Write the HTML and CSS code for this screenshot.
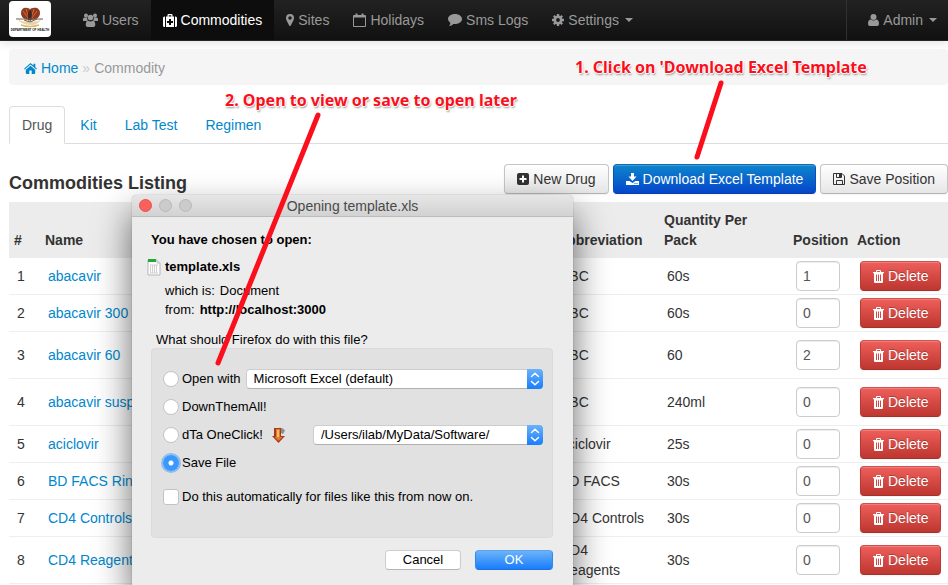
FILE: index.html
```html
<!DOCTYPE html>
<html lang="en">
<head>
<meta charset="utf-8">
<title>Commodities</title>
<link rel="stylesheet" href="styles.css">
</head>
<body>
<svg class="defs" aria-hidden="true">
  <defs>
    <symbol id="trash" viewBox="0 0 11 13"><path fill="currentColor" fill-rule="evenodd" d="M3 2V1q0-1 1-1h3q1 0 1 1v1h3v1.300h-1V12q0 1-1 1H2q-1 0-1-1V3.300H0V2zM4 2h3V1H4zM3 4.500V11h1V4.500zm2 0V11h1V4.500zm2 0V11h1V4.500z"/></symbol>
    <symbol id="steps" viewBox="0 0 16 20"><path d="M4.500 7.500 8 4.200l3.500 3.300M4.500 12.500 8 15.800l3.500-3.300" fill="none" stroke="#fff" stroke-width="1.500" stroke-linecap="round" stroke-linejoin="round"/></symbol>
  </defs>
</svg>

<header class="navbar">
  <a class="brand" href="#" aria-label="Department of Health">
    <svg width="42" height="36" viewBox="0 0 42 36">
      <path d="M21 19c-6 0-9-3-9-7 0-4 3-6 6-5q3 0 3 2 0-2 3-2c4-1 7 1 7 5s-3 7-10 7z" fill="#8f3a20"/>
      <path d="M17 8l3 9M25 8l-3 9M14 10l5 7M28 10l-5 7" stroke="#cf6a30" stroke-width="1"/>
      <path d="M19 11l3-2 1 5-1 6-3 1z" fill="#45261f"/>
      <path d="M8 17q6 6 12 2 8 4 13-2-4 8-12 7-9 0-13-7z" fill="#ead3a6"/>
      <path d="M7 18h27M15 19l6 2 7-3" stroke="#6d6259" stroke-width="1" fill="none"/>
      <path d="M12 24q9 3 18 0" stroke="#deb668" stroke-width="1.500" fill="none"/>
      <text class="brand-text" x="21" y="30" text-anchor="middle">DEPARTMENT OF HEALTH</text>
    </svg>
  </a>
  <nav class="menu">
    <a href="#"><svg width="15" height="14" viewBox="0 0 15 14" fill="currentColor"><circle cx="3" cy="2.500" r="2"/><circle cx="12" cy="2.500" r="2"/><circle cx="7.500" cy="4.500" r="2.800"/><path d="M0 8V6q0-1.500 1.500-1.500H4Q4 6.500 5 7.500L3.500 8zM15 8V6q0-1.500-1.500-1.500H11q0 2-1 3l1.500.5zM2.700 12q0-4.300 2.500-4.300 2.300 1.400 4.600 0 2.500 0 2.500 4.300 0 2-2 2H4.700q-2 0-2-2z"/></svg>Users</a>
    <a href="#" class="active"><svg width="14" height="13" viewBox="0 0 14 13" fill="currentColor"><path fill-rule="evenodd" d="M3 13V2.500h1.500V1q0-1 1-1h3q1 0 1 1v1.500H11V13zM5.700 2.500h2.600V1.200H5.700zM6 5v2H4v2h2v2h2V9h2V7H8V5z"/><path d="M2 2.500V13H1.500Q0 13 0 11.500V4q0-1.500 1.500-1.500zM12 2.500V13h.5q1.500 0 1.500-1.500V4q0-1.500-1.500-1.500z"/></svg>Commodities</a>
    <a href="#"><svg width="8" height="12" viewBox="0 0 8 12" fill="currentColor"><path fill-rule="evenodd" d="M4 0a4 4 0 0 1 4 4c0 2-1 3-3.200 7.500q-.8 1-1.600 0C1 7 0 6 0 4a4 4 0 0 1 4-4zm0 2.200a1.800 1.800 0 1 0 0 3.600 1.800 1.800 0 0 0 0-3.600z"/></svg>Sites</a>
    <a href="#"><svg width="13" height="14" viewBox="0 0 13 14" fill="none" stroke="currentColor"><path d="M.5 2.500h12v11H.5z"/><path d="M1 3.500h11" stroke-width="2"/><path d="M3.500.5v3M9.500.5v3" stroke-width="2"/></svg>Holidays</a>
    <a href="#"><svg width="14" height="12" viewBox="0 0 14 12" fill="currentColor"><path d="M7 0c4 0 7 2.200 7 5s-3 5-7 5l-1.500-.1Q3.500 12 1 12q1.500-1.500 1.300-3.200Q0 7.300 0 5c0-2.800 3-5 7-5z"/></svg>Sms Logs</a>
    <a href="#"><svg width="12" height="12" viewBox="0 0 12 12" fill="none" stroke="currentColor"><circle cx="6" cy="6" r="3.200" stroke-width="2.600"/><path d="M6 0v2.500M6 9.500V12M0 6h2.500M9.500 6H12M1.800 1.800l1.700 1.700M8.500 8.500l1.700 1.700M1.800 10.200l1.700-1.700M8.500 3.500l1.700-1.700" stroke-width="2.300"/></svg>Settings<i class="caret"></i></a>
  </nav>
  <a class="account" href="#"><svg width="11" height="12" viewBox="0 0 11 12" fill="currentColor"><circle cx="5.500" cy="3" r="3"/><path d="M0 10q0-4.500 2.800-4.500 2.700 2 5.400 0Q11 5.500 11 10q0 2-2 2H2q-2 0-2-2z"/></svg>Admin<i class="caret"></i></a>
</header>

<main class="page">
  <nav class="breadcrumb" aria-label="Breadcrumb">
    <a href="#"><svg width="13" height="11" viewBox="0 0 13 11" fill="currentColor"><path d="M6.500 0 9.500 2.600V.8h1.800v3.400L13 5.700l-.7.800-5.800-5-5.800 5-.7-.8z"/><path d="m6.500 2.700 4.700 4V10q0 1-1 1H7.700V7.500H5.300V11H2.800q-1 0-1-1V6.700z"/></svg>Home</a>
    <span class="divider">»</span>
    <span class="current">Commodity</span>
  </nav>

  <nav class="tabs">
    <a href="#" class="selected">Drug</a>
    <a href="#">Kit</a>
    <a href="#">Lab Test</a>
    <a href="#">Regimen</a>
  </nav>

  <div class="toolbar">
    <h1>Commodities Listing</h1>
    <div class="actions">
      <button type="button" class="btn"><svg width="12" height="12" viewBox="0 0 12 12"><rect width="12" height="12" rx="2" fill="currentColor"/><path d="M6 2.500v7M2.500 6h7" stroke="#fff" stroke-width="2"/></svg>New Drug</button>
      <button type="button" class="btn primary"><svg width="13" height="12" viewBox="0 0 13 12" fill="currentColor"><path d="M5 0h3v3.500h2.500L6.500 8l-4-4.500H5z"/><path fill-rule="evenodd" d="M0 8h3.500l3 2 3-2H13v4H0zm8.500 2v1h1v-1zm2 0v1h1v-1z"/></svg>Download Excel Template</button>
      <button type="button" class="btn"><svg width="12" height="12" viewBox="0 0 12 12" fill="none" stroke="currentColor"><path d="M.5.500h8.500l2.500 2.500v8.500H.5zM3.500 11.500v-4h6v4M3.500.500v4h5v-4"/><path d="M6 1v3h2V1z" fill="currentColor" stroke="none"/></svg>Save Position</button>
    </div>
  </div>

  <table class="listing">
    <colgroup><col class="c-num"><col><col class="c-abbr"><col class="c-qty"><col class="c-pos"><col class="c-act"></colgroup>
    <thead>
      <tr><th>#</th><th>Name</th><th>Abbreviation</th><th>Quantity Per Pack</th><th>Position</th><th>Action</th></tr>
    </thead>
    <tbody>
      <tr><td>1</td><td><a href="#">abacavir</a></td><td>ABC</td><td>60s</td><td><input type="text" value="1" aria-label="Position of row 1"></td><td><button type="button" class="btn danger"><svg width="11" height="13"><use href="#trash"/></svg>Delete</button></td></tr>
      <tr><td>2</td><td><a href="#">abacavir 300</a></td><td>ABC</td><td>60s</td><td><input type="text" value="0" aria-label="Position of row 2"></td><td><button type="button" class="btn danger"><svg width="11" height="13"><use href="#trash"/></svg>Delete</button></td></tr>
      <tr class="tall"><td>3</td><td><a href="#">abacavir 60</a></td><td>ABC</td><td>60</td><td><input type="text" value="2" aria-label="Position of row 3"></td><td><button type="button" class="btn danger"><svg width="11" height="13"><use href="#trash"/></svg>Delete</button></td></tr>
      <tr class="tall"><td>4</td><td><a href="#">abacavir susp</a></td><td>ABC</td><td>240ml</td><td><input type="text" value="0" aria-label="Position of row 4"></td><td><button type="button" class="btn danger"><svg width="11" height="13"><use href="#trash"/></svg>Delete</button></td></tr>
      <tr><td>5</td><td><a href="#">aciclovir</a></td><td>aciclovir</td><td>25s</td><td><input type="text" value="0" aria-label="Position of row 5"></td><td><button type="button" class="btn danger"><svg width="11" height="13"><use href="#trash"/></svg>Delete</button></td></tr>
      <tr><td>6</td><td><a href="#">BD FACS Rin</a></td><td>BD FACS</td><td>30s</td><td><input type="text" value="0" aria-label="Position of row 6"></td><td><button type="button" class="btn danger"><svg width="11" height="13"><use href="#trash"/></svg>Delete</button></td></tr>
      <tr><td>7</td><td><a href="#">CD4 Controls</a></td><td>CD4 Controls</td><td>30s</td><td><input type="text" value="0" aria-label="Position of row 7"></td><td><button type="button" class="btn danger"><svg width="11" height="13"><use href="#trash"/></svg>Delete</button></td></tr>
      <tr class="tall"><td>8</td><td><a href="#">CD4 Reagent</a></td><td>CD4 Reagents</td><td>30s</td><td><input type="text" value="0" aria-label="Position of row 8"></td><td><button type="button" class="btn danger"><svg width="11" height="13"><use href="#trash"/></svg>Delete</button></td></tr>
    </tbody>
  </table>
</main>

<section class="dialog" role="dialog" aria-labelledby="dialog-title">
  <div class="titlebar">
    <div class="lights"><i class="close"></i><i></i><i></i></div>
    <h2 id="dialog-title">Opening template.xls</h2>
  </div>
  <div class="dialog-body">
    <p class="lead">You have chosen to open:</p>
    <div class="file">
      <svg width="14" height="17" viewBox="0 0 14 17"><path d="M1 1h9l3 3v12H1z" fill="#fff" stroke="#b5b5b5"/><path d="M1 0h8v3H1z" fill="#24a83a"/><path d="M10 1v3h3" fill="#eee" stroke="#bbb"/><path d="M3 6h8M3.500 6v8M5.500 6v8M7.500 6v8M9.500 6v8M3 14h8" stroke="#d0d0d0"/></svg>
      <strong>template.xls</strong>
    </div>
    <dl class="facts">
      <div><dt>which is:</dt><dd>Document</dd></div>
      <div><dt>from:</dt><dd><strong>http://localhost:3000</strong></dd></div>
    </dl>
    <p class="question">What should Firefox do with this file?</p>
    <form class="panel">
      <div class="option"><input type="radio" name="act" id="open"><label for="open">Open with</label>
        <span class="picker"><select aria-label="Application"><option>Microsoft Excel (default)</option></select><svg class="cap" width="16" height="20"><use href="#steps"/></svg></span></div>
      <div class="option"><input type="radio" name="act" id="dta"><label for="dta">DownThemAll!</label></div>
      <div class="option"><input type="radio" name="act" id="one"><label for="one">dTa OneClick!</label>
        <svg class="arrow" width="15" height="17" viewBox="0 0 15 17"><path d="M7 1q5-1 7 2.500L12 7 7 5z" fill="#8d8d8d"/><path d="M3 1h7v8h4l-6.500 7L1 9h2z" fill="#a8381f"/><path d="M5 2h4v8h2.500l-4 4-4-4H5z" fill="#e07a2e"/><path d="M6 3h2v7H6z" fill="#fbc052"/></svg>
        <span class="picker folder"><select aria-label="Folder"><option>/Users/ilab/MyData/Software/</option></select><svg class="cap" width="16" height="20"><use href="#steps"/></svg></span></div>
      <div class="option"><input type="radio" name="act" id="save" checked><label for="save">Save File</label></div>
      <div class="option auto"><input type="checkbox" id="auto"><label for="auto">Do this automatically for files like this from now on.</label></div>
    </form>
    <div class="buttons"><button type="button">Cancel</button><button type="button" class="ok">OK</button></div>
  </div>
</section>

<svg class="pointers" width="948" height="585" aria-hidden="true">
  <path d="M721 83 697 157" stroke-width="5"/>
  <path d="M318 115 218 363" stroke-width="5"/>
</svg>
<p class="note first">1. Click on 'Download Excel Template</p>
<p class="note second">2. Open to view or save to open later</p>
</body>
</html>
```

FILE: styles.css
```css
* { box-sizing: border-box; }

body {
  position: relative;
  height: 100vh;
  margin: 0;
  overflow: hidden;
  background: #fff;
  color: #333;
  font: 14px/20px "Liberation Sans", Arial, sans-serif;
}

p, h1, h2, dl, dd { margin: 0; }
a { color: #08c; text-decoration: none; }
button, input, select { font: inherit; }
.defs { position: absolute; width: 0; height: 0; }

/* Top bar */
.navbar {
  display: flex;
  height: 41px;
  padding-left: 9px;
  border-bottom: 1px solid #252525;
  background: linear-gradient(#222, #111);
  box-shadow: 0 1px 10px rgba(0, 0, 0, .15);
}
.brand {
  height: 36px;
  margin: 1px 20px 0 0;
  border-radius: 4px;
  background: #fff;
}
.brand svg { display: block; }
.brand-text { font: bold 3px "Liberation Sans", Arial, sans-serif; fill: #111; }
.menu { display: flex; flex: 1; }
.menu a, .account {
  display: flex;
  align-items: center;
  gap: 4px;
  padding: 0 12px;
  color: #999;
}
.menu a.active { background: #0d0d0d; color: #fff; }
.account { padding: 0 11px 0 21px; border-left: 1px solid #303030; }
.caret {
  margin-left: 2px;
  border: 4px solid transparent;
  border-top-color: #999;
  border-bottom: 0;
}

/* Page */
.page { padding: 8px 0 0 9px; }
.breadcrumb {
  display: flex;
  gap: 4px;
  padding: 9px 15px 7px;
  border-radius: 4px;
  background: #f5f5f5;
}
.breadcrumb a { display: flex; align-items: center; gap: 4px; }
.divider { color: #ccc; }
.current { color: #999; }

.tabs {
  display: flex;
  gap: 2px;
  margin-top: 21px;
  border-bottom: 1px solid #ddd;
}
.tabs a {
  margin-bottom: -1px;
  padding: 8px 12px;
  border: 1px solid transparent;
  border-radius: 4px 4px 0 0;
}
.tabs .selected { border-color: #ddd #ddd #fff; background: #fff; color: #555; }

.toolbar {
  display: flex;
  align-items: center;
  justify-content: space-between;
  margin: 20px 0 8px;
}
.toolbar h1 { padding-top: 8px; font-size: 18px; line-height: 22px; }
.actions { display: flex; gap: 4px; }
.btn {
  display: flex;
  align-items: center;
  gap: 4px;
  height: 30px;
  padding: 0 12px;
  border: 1px solid #c5c5c5;
  border-bottom-color: #b3b3b3;
  border-radius: 4px;
  background: linear-gradient(#fff, #e6e6e6);
  box-shadow: inset 0 1px 0 rgba(255, 255, 255, .2), 0 1px 2px rgba(0, 0, 0, .05);
  color: #333;
  white-space: nowrap;
}
.btn.primary {
  border-color: #0a6cb8 #0a4fb8 #0a3fa8;
  background: linear-gradient(#0e85cb, #0546cb);
  color: #fff;
}
.btn.danger {
  border-color: #d0504c #b93a34 #a5302b;
  background: linear-gradient(#ee5f5b, #bd362f);
  color: #fff;
  text-shadow: 0 -1px 0 rgba(0, 0, 0, .25);
}

/* Listing */
.listing { width: 100%; table-layout: fixed; border-collapse: separate; border-spacing: 0; }
.c-num { width: 31px; }
.c-abbr { width: 107px; }
.c-qty { width: 129px; }
.c-pos { width: 64px; }
.c-act { width: 96px; }
.listing th {
  padding: 8px 5px;
  background: #ececec;
  text-align: left;
  vertical-align: bottom;
}
.listing td {
  height: 37px;
  padding: 0 8px;
  border-bottom: 1px solid #eee;
  vertical-align: middle;
}
.listing .tall td { height: 47px; }
.listing input {
  display: block;
  width: 44px;
  height: 30px;
  padding: 0 6px;
  border: 1px solid #ccc;
  border-radius: 4px;
  background: #fff;
  box-shadow: inset 0 1px 1px rgba(0, 0, 0, .075);
  color: #555;
}

/* Download dialog */
.dialog {
  position: absolute;
  top: 195px;
  left: 132px;
  width: 441px;
  bottom: 0;
  border-radius: 5px 5px 0 0;
  background: #ececec;
  box-shadow: 0 0 1px rgba(0, 0, 0, .5), 0 18px 36px rgba(0, 0, 0, .6);
  color: #000;
  font-size: 13px;
}
.titlebar {
  display: grid;
  grid-template-columns: 1fr auto 1fr;
  align-items: center;
  height: 22px;
  padding: 0 7px;
  border-bottom: 1px solid #bcbcbc;
  border-radius: 5px 5px 0 0;
  background: linear-gradient(#e6e6e6, #d2d2d2);
}
.titlebar h2 { color: #4a4a4a; font-size: 14px; font-weight: normal; }
.lights { display: flex; gap: 7px; }
.lights i {
  width: 13px;
  height: 13px;
  border: 1px solid #b9b9b9;
  border-radius: 50%;
  background: #cbcbcb;
}
.lights .close { border-color: #e8504c; background: #fc605c; }
.dialog-body { padding: 13px 20px 0 19px; }
.lead { font-weight: bold; }
.file { display: flex; align-items: center; gap: 4px; margin: 7px 0 4px -4px; }
.facts { padding-left: 14px; }
.facts div { display: flex; gap: 5px; line-height: 19px; }
.question { margin: 11px 0 0 5px; }
.panel {
  height: 190px;
  margin-top: -2px;
  padding: 16px 9px 0 11px;
  border: 1px solid #dbdbdb;
  border-radius: 4px;
  background: #e1e1e1;
}
.option { display: flex; align-items: center; height: 28px; gap: 3px; }
.option.auto { margin-top: 6px; }
.option label { white-space: nowrap; }
.option input {
  flex: none;
  appearance: none;
  width: 16px;
  height: 16px;
  margin: 0;
  border: 1px solid #c3c3c3;
  border-radius: 50%;
  background: #fff;
}
.option input:checked {
  border: 0;
  background: radial-gradient(circle, #fff 0 2px, #3b99fc 3px);
  box-shadow: 0 0 0 2px #8dbcf0;
}
.option input[type="checkbox"] { border-radius: 3px; }
.picker { position: relative; flex: 1; height: 20px; margin-left: 2px; }
.arrow { margin-left: 5px; }
.picker.folder { margin-left: 24px; }
.picker select {
  display: block;
  appearance: none;
  width: 100%;
  height: 20px;
  padding: 0 20px 0 7px;
  border: 1px solid #cdcdcd;
  border-bottom-color: #b0b0b0;
  border-radius: 4px;
  background: #fff;
  color: #000;
  line-height: 18px;
}
.cap {
  position: absolute;
  top: 0;
  right: 0;
  border-radius: 0 4px 4px 0;
  background: linear-gradient(#6bb3fa, #1a7dfb);
  pointer-events: none;
}
.buttons { display: flex; justify-content: flex-end; gap: 14px; margin-top: 12px; }
.buttons button {
  width: 76px;
  height: 20px;
  padding: 0;
  border: 1px solid #cdcdcd;
  border-bottom-color: #b5b5b5;
  border-radius: 4px;
  background: #fff;
  color: #000;
  line-height: 18px;
}
.buttons .ok {
  width: 78px;
  border-color: #5aa5f0 #2f88f0 #1a70e0;
  background: linear-gradient(#6bb3fa, #1a7dfb);
  color: #fff;
}

/* Callouts drawn over the page */
.pointers {
  position: absolute;
  top: 0;
  left: 0;
  fill: none;
  stroke: #fb0f1d;
  stroke-linecap: round;
  pointer-events: none;
}
.note {
  position: absolute;
  color: #fb0f1d;
  font: bold 16px/22px "Noto Sans", "Open Sans", sans-serif;
  text-shadow: 1px 0 #fff, -1px 0 #fff, 0 1px #fff, 0 -1px #fff, 1px 2px 2px #999;
  white-space: nowrap;
}
.first { top: 56px; left: 575px; }
.second { top: 89px; left: 225px; }
```
